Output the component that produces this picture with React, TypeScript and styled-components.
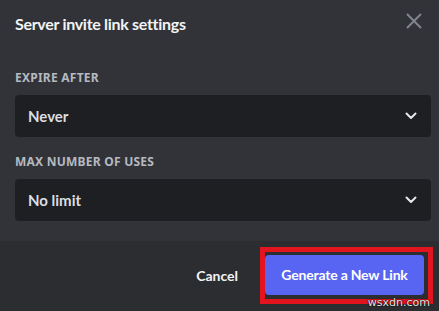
import React from "react";
import styled, { createGlobalStyle } from "styled-components";

const GlobalStyle = createGlobalStyle`
  html, body {
    margin: 0;
    padding: 0;
    background: #313338;
  }
  body {
    font-family: Lato, "Noto Sans", sans-serif;
    -webkit-font-smoothing: antialiased;
  }
`;

const Modal = styled.div`
  position: relative;
  width: 439px;
  height: 311px;
  display: flex;
  flex-direction: column;
  background: #313338;
  overflow: hidden;
`;

const Header = styled.div`
  display: flex;
  justify-content: space-between;
  align-items: flex-start;
  padding: 13px 15px 0 15px;
  height: 58px;
  box-sizing: border-box;
`;

const Title = styled.h1`
  margin: 0;
  font-size: 16px;
  line-height: 22px;
  font-weight: 700;
  letter-spacing: -0.3px;
  color: #f2f3f5;
`;

const CloseButton = styled.button`
  background: none;
  border: none;
  padding: 0;
  margin-top: -1px;
  margin-right: 1px;
  width: 18px;
  height: 18px;
  color: #80848e;
  cursor: pointer;
  display: flex;
`;

const Body = styled.div`
  flex: 1;
  padding: 0 8px 0 15px;
`;

const Label = styled.div<{ $top: number }>`
  margin-top: ${(p) => p.$top}px;
  margin-bottom: 9px;
  font-family: "Noto Sans", sans-serif;
  font-size: 12px;
  line-height: 16px;
  font-weight: 700;
  letter-spacing: 0.02em;
  text-transform: uppercase;
  color: #b5bac1;
`;

const Select = styled.div`
  height: 42px;
  box-sizing: border-box;
  display: flex;
  align-items: center;
  justify-content: space-between;
  padding: 0 14px 0 13px;
  background: #1e1f22;
  border-radius: 4px;
  font-size: 15px;
  font-weight: 700;
  color: #dbdee1;
`;

const Footer = styled.div`
  height: 70px;
  flex-shrink: 0;
  display: flex;
  justify-content: flex-end;
  align-items: center;
  gap: 22px;
  padding: 0 6px 2px 0;
  box-sizing: border-box;
  background: #2b2d31;
`;

const TextButton = styled.button`
  background: none;
  border: none;
  padding: 0;
  font-family: inherit;
  font-size: 14px;
  font-weight: 700;
  color: #f2f3f5;
  cursor: pointer;
`;

const Highlight = styled.div`
  border: 5px solid #e2141e;
  padding: 3px 4px 4px 0;
  background: #2b2d31;
`;

const PrimaryButton = styled.button`
  width: 159px;
  height: 40px;
  border: none;
  border-radius: 4px;
  background: #5865f2;
  color: #ffffff;
  font-family: inherit;
  font-size: 14px;
  font-weight: 700;
  letter-spacing: -0.2px;
  cursor: pointer;
  display: block;
`;

const Watermark = styled.div`
  position: absolute;
  right: 9px;
  bottom: 2px;
  font-family: "DejaVu Sans", sans-serif;
  font-size: 11px;
  color: #e8e8e8;
  text-shadow: 0 0 2px #000, 0 0 1px #000;
`;

const Chevron = () => (
  <svg width="12" height="8" viewBox="0 0 12 8" fill="none">
    <path d="M1.5 1.5 L6 6 L10.5 1.5" stroke="#e6e7e9" strokeWidth="2" strokeLinecap="round" strokeLinejoin="round" />
  </svg>
);

const CloseIcon = () => (
  <svg width="18" height="18" viewBox="0 0 18 18" fill="none">
    <path d="M2 2 L16 16 M16 2 L2 16" stroke="currentColor" strokeWidth="2" />
  </svg>
);

export default function App() {
  return (
    <>
      <GlobalStyle />
      <Modal>
        <Header>
          <Title>Server invite link settings</Title>
          <CloseButton aria-label="Close">
            <CloseIcon />
          </CloseButton>
        </Header>
        <Body>
          <Label $top={12}>Expire After</Label>
          <Select>
            Never
            <Chevron />
          </Select>
          <Label $top={17}>Max Number of Uses</Label>
          <Select>
            No limit
            <Chevron />
          </Select>
        </Body>
        <Footer>
          <TextButton>Cancel</TextButton>
          <Highlight>
            <PrimaryButton>Generate a New Link</PrimaryButton>
          </Highlight>
        </Footer>
        <Watermark>wsxdn.com</Watermark>
      </Modal>
    </>
  );
}
